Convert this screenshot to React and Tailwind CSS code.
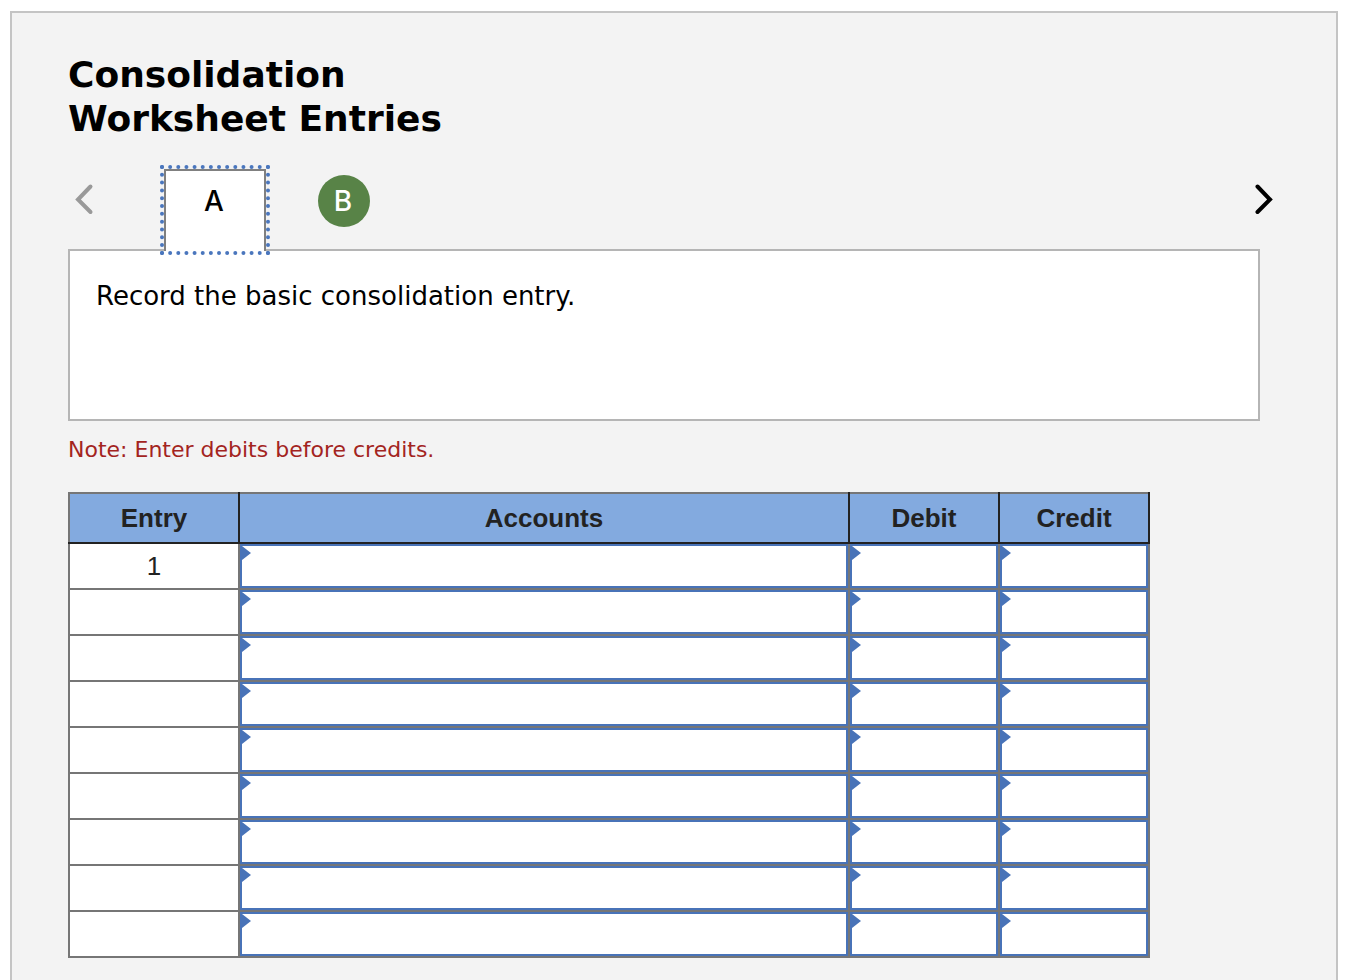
import React, { useState } from 'react';

const ROWS = [1, 2, 3, 4, 5, 6, 7, 8, 9];
const FIELDS = ['Accounts', 'Debit', 'Credit'];

function Chevron({ direction }) {
  return (
    <svg
      viewBox="0 0 32 40"
      className="w-8 h-10"
      fill="none"
      stroke="currentColor"
      strokeWidth="4"
      strokeLinecap="round"
      strokeLinejoin="miter"
      aria-hidden="true"
    >
      {direction === 'left' ? <path d="M22.5 7.5 L10 20.5 L22.5 33" /> : <path d="M9.5 7.5 L22 20.5 L9.5 33" />}
    </svg>
  );
}

function EntryCell({ row, field }) {
  return (
    <td className="border-2 border-[#767676] p-0">
      <div className="relative">
        <input
          type="text"
          aria-label={`${field}, line ${row}`}
          className="block w-full h-11 px-4 bg-white border-2 border-[#4873b8] rounded-none outline-none text-[26px] text-[#222]"
        />
        {/* Corner flag marks the cell as editable */}
        <span className="absolute left-0.5 top-0.5 border-y-[7px] border-y-transparent border-l-[9px] border-l-[#4873b8] pointer-events-none" />
      </div>
    </td>
  );
}

export default function App() {
  const [active, setActive] = useState('A');

  const tabClass = (id) =>
    active === id
      ? 'w-[102px] h-[82px] pb-5 pr-0.5 bg-white border-2 border-b-0 border-[#808080] outline-4 outline-dotted outline-[#4a76bd] text-black'
      : 'w-13 h-13 mt-1.5 pr-0.5 rounded-full bg-[#588347] text-white';

  return (
    <main className="ml-2.5 mr-3 mt-[11px] border-2 border-[#c4c4c4] bg-[#f3f3f3] px-14 pt-10 pb-14 font-['DejaVu_Sans',sans-serif] text-black">
      <h1 className="max-w-96 text-[36px] leading-[44px] font-bold">Consolidation Worksheet Entries</h1>

      <div className="mt-7 flex items-start">
        <button type="button" aria-label="Previous entry" className="mt-2.5 mr-16 text-[#999]">
          <Chevron direction="left" />
        </button>
        <div role="tablist" className="relative flex gap-[52px] -mb-0.5 font-[Inter,sans-serif] text-[28px] leading-10 font-medium">
          {['A', 'B'].map((id) => (
            <button
              key={id}
              type="button"
              role="tab"
              aria-selected={active === id}
              onClick={() => setActive(id)}
              className={tabClass(id)}
            >
              {id}
            </button>
          ))}
        </div>
        <button type="button" aria-label="Next entry" className="mt-2.5 ml-auto">
          <Chevron direction="right" />
        </button>
      </div>

      <section className="mr-5 min-h-43 border-2 border-[#b5b5b5] bg-white px-[26px] py-[25px]">
        <p className="text-[26px] leading-10">Record the basic consolidation entry.</p>
      </section>

      <p className="mt-[13px] text-[22px] leading-8 text-[#a3241e]">Note: Enter debits before credits.</p>

      <table className="mt-[26px] w-full max-w-[1082px] table-fixed border-collapse border-2 border-[#767676] bg-white font-['Liberation_Sans',sans-serif] text-[26px] text-[#222]">
        <colgroup>
          <col className="w-[170px]" />
          <col />
          <col className="w-[150px]" />
          <col className="w-[150px]" />
        </colgroup>
        <thead>
          <tr className="h-[50px] bg-[#83aadf]">
            {['Entry', ...FIELDS].map((name) => (
              <th key={name} scope="col" className="border-r-2 border-b-2 border-[#222] p-0 leading-8 font-bold">
                {name}
              </th>
            ))}
          </tr>
        </thead>
        <tbody>
          {ROWS.map((row) => (
            <tr key={row}>
              <td className="border-2 border-[#767676] p-0 text-center leading-8">{row === 1 ? row : ''}</td>
              {FIELDS.map((field) => (
                <EntryCell key={field} row={row} field={field} />
              ))}
            </tr>
          ))}
        </tbody>
      </table>
    </main>
  );
}
